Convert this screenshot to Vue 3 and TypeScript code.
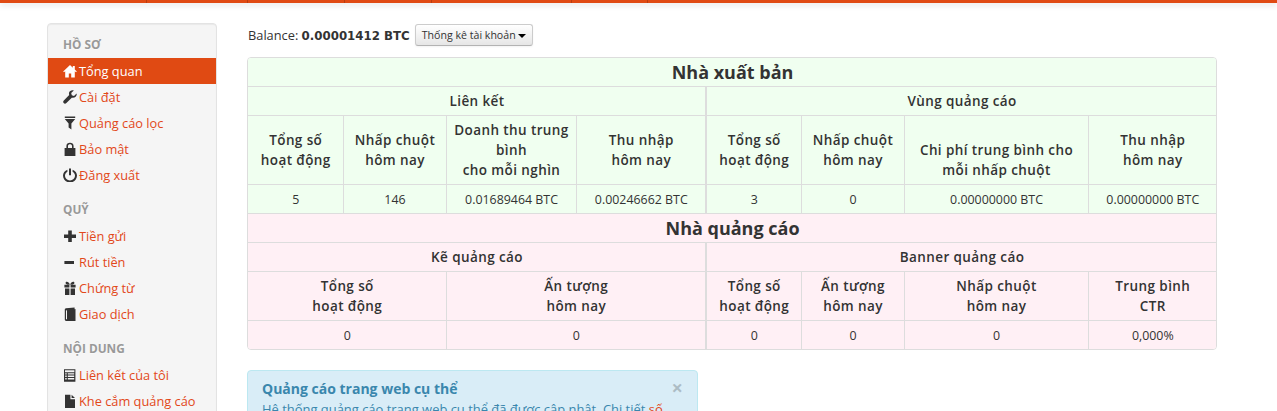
<script setup lang="ts">
type Item = { label: string; icon: string; active?: boolean }
type Group = { title: string; items: Item[] }

const groups: Group[] = [
  {
    title: 'HỒ SƠ',
    items: [
      { label: 'Tổng quan', icon: 'home', active: true },
      { label: 'Cài đặt', icon: 'wrench' },
      { label: 'Quảng cáo lọc', icon: 'filter' },
      { label: 'Bảo mật', icon: 'lock' },
      { label: 'Đăng xuất', icon: 'power' },
    ],
  },
  {
    title: 'QUỸ',
    items: [
      { label: 'Tiền gửi', icon: 'plus' },
      { label: 'Rút tiền', icon: 'minus' },
      { label: 'Chứng từ', icon: 'gift' },
      { label: 'Giao dịch', icon: 'book' },
    ],
  },
  {
    title: 'NỘI DUNG',
    items: [
      { label: 'Liên kết của tôi', icon: 'list' },
      { label: 'Khe cắm quảng cáo', icon: 'file' },
    ],
  },
]

const icons: Record<string, string> = {
  home: 'M7 1 0.2 7.4 1 8.2 2.2 7.2v6.3h3.6V9.5h2.4v4h3.6V7.2L13 8.2l.8-.8-2-1.9V2h-2v1.7L7 1z',
  wrench: 'M13.6 3.4 11 6 8.8 5.3 8.2 3l2.6-2.6C8.6-.2 6.4.9 6 3c-.1.8 0 1.5.2 2.1L.8 10.4c-.8.8-.8 1.9-.1 2.7.8.8 1.9.7 2.7 0l5.4-5.4c2.9.8 5.6-1.6 4.8-4.3z',
  filter: 'M1.8.6h10.4v1.3H1.8zM1.8 3h10.4L8.4 7.4V13.6L5.6 11.6V7.4z',
  lock: 'M1.6 6h1.8V4C3.4 2 5 .8 7 .8S10.6 2 10.6 4v2h1.8v8H1.6zM5 6h4V4C9 2.9 8.1 2.3 7 2.3S5 2.9 5 4z',
  power: 'M4.4 1.7v2C2.9 4.5 2 6 2 7.6c0 2.8 2.2 4.9 5 4.9s5-2.1 5-4.9c0-1.6-.9-3.1-2.4-3.9v-2c2.6 1 4.4 3.3 4.4 5.9 0 3.8-3.1 6.9-7 6.9S0 11.4 0 7.6c0-2.6 1.8-4.9 4.4-5.9zM6 .4h2v6.8H6z',
  plus: 'M5.2 1.5h3.6v4h4.2v3.4H8.8v4H5.2v-4H1V5.5h4.2z',
  minus: 'M1.4 6h9.6v3H1.4z',
  gift: 'M1.4 3.8h5v2.8h-5zM7.6 3.8h5v2.8h-5zM2 7.6h4.4V14H2zM7.6 7.6H12V14H7.6zM3.2 .8c1.4-.6 2.9.8 3.8 2.6.9-1.8 2.4-3.2 3.8-2.6 1.2.6.8 2.4-1 2.8H4.2C2.4 3.2 2 1.4 3.2.8z',
  book: 'M3 1.2 11.6.4v1.8l.9-.1V14H3.2C2.3 14 1.8 13.4 1.8 12.6V2.6C1.8 1.8 2.2 1.3 3 1.2zM3 3.2v8.8l1 .5V3.6z',
  list: 'M1 1.2h11.4v12.6H1zM2 2.2v2h9.4v-2zM2.2 5.2v1.4h1.5V5.2zM4.8 5.2v1.4h6.4V5.2zM2.2 7.6V9h1.5V7.6zM4.8 7.6V9h6.4V7.6zM2.2 10v1.4h1.5V10zM4.8 10v1.4h6.4V10z',
  file: 'M2 .8h5.4v4.4h4.6V14H2zM8.6.8l3.4 3.2H8.6z',
}

type Cell = { text: string[]; span?: number }
type Row = { cells: Cell[]; kind: string }

const c = (text: string, span = 1): Cell => ({ text: text.split('|'), span })

const pubRows: Row[] = [
  { kind: 'title', cells: [c('Nhà xuất bản', 8)] },
  { kind: 'sub', cells: [c('Liên kết', 4), c('Vùng quảng cáo', 4)] },
  {
    kind: 'head',
    cells: [
      c('Tổng số|hoạt động'),
      c('Nhấp chuột|hôm nay'),
      c('Doanh thu trung bình|cho mỗi nghìn'),
      c('Thu nhập|hôm nay'),
      c('Tổng số|hoạt động'),
      c('Nhấp chuột|hôm nay'),
      c('|Chi phí trung bình cho|mỗi nhấp chuột'),
      c('Thu nhập|hôm nay'),
    ],
  },
  {
    kind: 'data',
    cells: [
      c('5'),
      c('146'),
      c('0.01689464 BTC'),
      c('0.00246662 BTC'),
      c('3'),
      c('0'),
      c('0.00000000 BTC'),
      c('0.00000000 BTC'),
    ],
  },
]

const advRows: Row[] = [
  { kind: 'title', cells: [c('Nhà quảng cáo', 8)] },
  { kind: 'sub', cells: [c('Kẽ quảng cáo', 4), c('Banner quảng cáo', 4)] },
  {
    kind: 'head',
    cells: [
      c('Tổng số|hoạt động', 2),
      c('Ấn tượng|hôm nay', 2),
      c('Tổng số|hoạt động'),
      c('Ấn tượng|hôm nay'),
      c('Nhấp chuột|hôm nay'),
      c('Trung bình|CTR'),
    ],
  },
  {
    kind: 'data',
    cells: [c('0', 2), c('0', 2), c('0'), c('0'), c('0'), c('0,000%')],
  },
]

const sections = [
  { tone: 'pub', rows: pubRows },
  { tone: 'adv', rows: advRows },
]

const cols = [95, 103, 130, 130, 95, 103, 184, 128]
const ticks = [146, 247, 344, 431, 571, 647]

// Column 4 is the divider between the two halves of each row.
function isSplit(row: Row, index: number): boolean {
  let pos = 0
  for (let i = 0; i <= index; i++) pos += row.cells[i].span ?? 1
  return pos === 4
}
</script>

<template>
  <div class="page">
    <div class="topbar">
      <i v-for="t in ticks" :key="t" :style="{ left: t + 'px' }"></i>
    </div>
    <div class="layout">
      <aside class="side">
        <section v-for="g in groups" :key="g.title" class="group">
          <h5>{{ g.title }}</h5>
          <a v-for="it in g.items" :key="it.label" class="nav" :class="{ active: it.active }">
            <svg class="ico" viewBox="0 0 14 14"><path :d="icons[it.icon]" fill-rule="evenodd" /></svg>
            <span>{{ it.label }}</span>
          </a>
        </section>
      </aside>
      <main class="main">
        <div class="balance">
          <span>Balance: <b>0.00001412 BTC</b></span>
          <button class="btn">Thống kê tài khoản <span class="caret"></span></button>
        </div>
        <div class="tablewrap">
          <table>
            <colgroup>
              <col v-for="(w, i) in cols" :key="i" :style="{ width: w + 'px' }" />
            </colgroup>
            <tbody v-for="s in sections" :key="s.tone" :class="s.tone">
              <tr v-for="(r, ri) in s.rows" :key="ri" :class="r.kind">
                <td
                  v-for="(cell, ci) in r.cells"
                  :key="ci"
                  :colspan="cell.span"
                  :class="{ split: isSplit(r, ci) }"
                >
                  <template v-for="(line, li) in cell.text" :key="li">
                    <br v-if="li" />{{ line }}
                  </template>
                </td>
              </tr>
            </tbody>
          </table>
        </div>
        <div class="alert">
          <span class="close">×</span>
          <h4>Quảng cáo trang web cụ thể</h4>
          <p>Hệ thống quảng cáo trang web cụ thể đã được cập nhật. Chi tiết <a>số</a></p>
        </div>
      </main>
    </div>
  </div>
</template>

<style>
html,
body {
  margin: 0;
  height: 411px;
  overflow: hidden;
  background: #fff;
}
</style>

<style scoped>
.page {
  font-family: 'Open Sans', 'Noto Sans', sans-serif;
  font-size: 12.8px;
  line-height: 20px;
  color: #333;
  height: 411px;
  overflow: hidden;
}
.topbar {
  height: 3px;
  background: #e04a13;
  box-shadow: 0 2px 6px rgba(0, 0, 0, 0.15);
  position: relative;
}
.topbar i {
  position: absolute;
  top: 0;
  width: 1px;
  height: 3px;
  background: #b93c0e;
}
.layout {
  display: flex;
  align-items: flex-start;
  gap: 30px;
  padding: 20px 0 0 47px;
}
.side {
  width: 168px;
  flex: none;
  background: #f5f5f5;
  border: 1px solid #e3e3e3;
  border-radius: 4px;
  padding: 7px 0 0;
  box-shadow: inset 0 1px 1px rgba(0, 0, 0, 0.05);
}
.group {
  margin-bottom: 8px;
}
.group h5 {
  margin: 0;
  padding: 3px 15px 4px;
  font-size: 11.8px;
  line-height: 20px;
  font-weight: 700;
  color: #999;
  text-shadow: 0 1px 0 rgba(255, 255, 255, 0.5);
}
.nav {
  display: flex;
  align-items: center;
  height: 26px;
  padding-left: 15px;
  color: #e2481a;
  font-size: 12.8px;
}
.nav .ico {
  width: 14px;
  height: 14px;
  margin-right: 2px;
  fill: #333;
  flex: none;
}
.nav.active {
  background: #e04a13;
  color: #fff;
}
.nav.active .ico {
  fill: #fff;
}
.main {
  width: 970px;
  flex: none;
}
.balance {
  display: flex;
  align-items: center;
  gap: 5px;
  height: 22px;
  margin: 1px 0 11px;
  padding-left: 1px;
  font-size: 12.8px;
}
.balance b {
  font-family: 'DejaVu Sans', sans-serif;
  font-size: 11.8px;
}
.btn {
  height: 22px;
  padding: 0 6px;
  font: inherit;
  font-size: 10.6px;
  color: #333;
  background: linear-gradient(#fff, #e6e6e6);
  border: 1px solid #ccc;
  border-bottom-color: #b3b3b3;
  border-radius: 3px;
  box-shadow: inset 0 1px 0 rgba(255, 255, 255, 0.2), 0 1px 2px rgba(0, 0, 0, 0.05);
}
.caret {
  display: inline-block;
  vertical-align: middle;
  border-top: 4px solid #000;
  border-left: 4px solid transparent;
  border-right: 4px solid transparent;
}
.tablewrap {
  border: 1px solid #ddd;
  border-radius: 4px;
  overflow: hidden;
  margin-bottom: 20px;
}
table {
  width: 100%;
  table-layout: fixed;
  border-collapse: collapse;
  text-align: center;
}
td {
  border-left: 1px solid #ddd;
  border-top: 1px solid #ddd;
  padding: 4px 3px 4px 4px;
  line-height: 20px;
}
td:first-child {
  border-left: 0;
}
td.split {
  border-right: 2px solid #ddd;
}
.pub {
  background: #f0fff0;
}
.adv {
  background: #fff0f5;
}
tbody:first-of-type tr:first-child td {
  border-top: 0;
}
.title td {
  font-size: 18px;
  font-weight: 700;
}
.sub td,
.head td {
  font-weight: 600;
  font-size: 13.5px;
  letter-spacing: 0.4px;
}
.data td {
  font-size: 12.4px;
  padding-top: 5px;
  padding-bottom: 3px;
}
.alert {
  position: relative;
  box-sizing: border-box;
  width: 451px;
  padding: 8px 14px;
  background: #d9edf7;
  border: 1px solid #bce8f1;
  border-radius: 4px;
  color: #3a87ad;
}
.alert h4 {
  margin: 0;
  font-size: 14px;
  font-weight: 700;
  line-height: 20px;
}
.alert p {
  margin: 0;
  font-size: 12.95px;
  line-height: 20px;
}
.alert a {
  color: #e2481a;
}
.close {
  position: absolute;
  right: 14px;
  top: 7px;
  font-size: 20px;
  font-weight: 700;
  color: #000;
  opacity: 0.2;
}
</style>
